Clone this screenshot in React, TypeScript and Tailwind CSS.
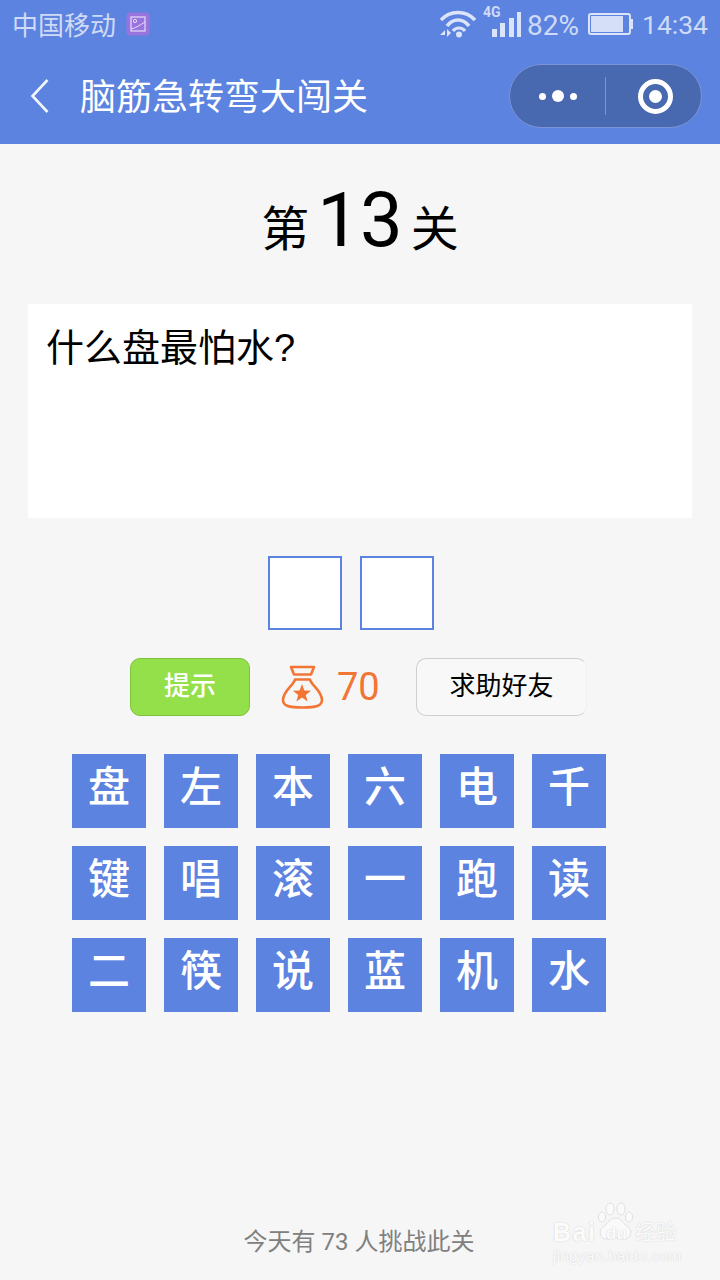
const FONT = "font-['Roboto','Noto_Sans_CJK_SC',sans-serif]";

const chars = ["盘","左","本","六","电","千","键","唱","滚","一","跑","读","二","筷","说","蓝","机","水"];

function StatusBar() {
  return (
    <div className="h-12 flex items-center justify-between pl-3 pr-3 text-[#cfdaf6]">
      <div className="flex items-center gap-[10px]">
        <span className="text-[26px] leading-[48px] pt-[4px]">中国移动</span>
        <svg width="24" height="24" viewBox="0 0 24 24">
          <rect width="23" height="23" x="0.5" y="0.5" rx="4" fill="#9a74de" />
          <rect x="5" y="5" width="14" height="14" fill="none" stroke="#e4dcf7" strokeWidth="1.2" />
          <circle cx="9" cy="9" r="1.6" fill="none" stroke="#e4dcf7" strokeWidth="1" />
          <path d="M5 17 C10 16 14 13 19 10" fill="none" stroke="#e4dcf7" strokeWidth="1" />
        </svg>
      </div>
      <div className="flex items-center">
        <svg width="38" height="28" viewBox="0 0 38 28" className="mr-[15px]">
          <path d="M2 10 C11 0 27 0 36 10" fill="none" stroke="#dbe4f9" strokeWidth="3.6" />
          <path d="M8 16 C14 8 24 8 30 16" fill="none" stroke="#dbe4f9" strokeWidth="3.6" />
          <path d="M14 21 C17 17 23 17 26 21" fill="none" stroke="#dbe4f9" strokeWidth="3.2" />
          <circle cx="20" cy="24.5" r="3" fill="#dbe4f9" />
          <path d="M1 25 L6 20 V25 Z M8 19 L12 23 L8 27 Z" fill="#dbe4f9" />
        </svg>
        <div className="relative w-[29px] h-[25px] flex items-end justify-between mr-[6px] mt-[1px]">
          <span className="absolute -top-[7px] -left-[9px] text-[14px] leading-[14px] font-bold">4G</span>
          <span className="w-[5px] h-[8px] bg-[#dbe4f9]" />
          <span className="w-[5px] h-[14px] bg-[#dbe4f9]" />
          <span className="w-[5px] h-[19px] bg-[#dbe4f9]" />
          <span className="w-[4px] h-[25px] bg-[#dbe4f9]" />
        </div>
        <span className="text-[28px] leading-[48px] mr-[9px] pt-[3px]">82%</span>
        <div className="flex items-center mr-[9px]">
          <div className="w-[43px] h-[22px] border-2 border-[#dbe4f9] rounded-[3px] p-[1px]">
            <div className="w-[32px] h-full bg-[#d5dff8]" />
          </div>
          <div className="w-[2px] h-[10px] bg-[#dbe4f9]" />
        </div>
        <span className="text-[26.5px] leading-[48px] pt-[2px]">14:34</span>
      </div>
    </div>
  );
}

function NavBar() {
  return (
    <div className="h-24 flex items-center justify-between pl-[30px] pr-[18px] text-white">
      <div className="flex items-center">
        <svg width="20" height="36" viewBox="0 0 20 36" className="mr-[30px]">
          <path d="M17.5 2 L2.5 18 L17.5 34" fill="none" stroke="#f4f6fd" strokeWidth="2.6" />
        </svg>
        <span className="text-[36px] leading-[48px] pt-[4px]">脑筋急转弯大闯关</span>
      </div>
      <div className="w-[193px] h-[64px] rounded-full bg-[#4868b0] border border-[#7a94d6] flex items-center">
        <div className="w-[95px] flex items-center justify-center gap-[6px]">
          <span className="w-[7px] h-[7px] rounded-full bg-white" />
          <span className="w-[12px] h-[12px] rounded-full bg-white" />
          <span className="w-[7px] h-[7px] rounded-full bg-white" />
        </div>
        <div className="w-px h-[38px] bg-[#7a94d6]" />
        <div className="flex-1 flex items-center justify-center pl-[3px]">
          <div className="w-[35px] h-[35px] rounded-full border-[5px] border-white flex items-center justify-center">
            <span className="w-[13px] h-[13px] rounded-full bg-white" />
          </div>
        </div>
      </div>
    </div>
  );
}

function Bag() {
  return (
    <svg width="44" height="44" viewBox="0 0 44 44">
      <path d="M10 2 H33 L30 9.5 H13 Z" fill="none" stroke="#f27534" strokeWidth="2.6" strokeLinejoin="round" />
      <path d="M14 14.5 C13 20 2 26 2 35 C2 41 8 42.5 21.5 42.5 C35 42.5 41 41 41 35 C41 26 30 20 29 14.5 Z" fill="none" stroke="#f27534" strokeWidth="2.6" strokeLinejoin="round" />
      <path d="M21 19 L23.4 25.6 L30 25.8 L24.8 29.9 L26.6 36.5 L21 32.6 L15.4 36.5 L17.2 29.9 L12 25.8 L18.6 25.6 Z" fill="#f27534" />
    </svg>
  );
}

function Watermark() {
  return (
    <div className="absolute left-[553px] top-[1202px] w-[130px] h-[62px] text-[#fbfbfb] [text-shadow:0_0_1.5px_#c9c9c9] font-['Liberation_Sans',sans-serif]">
      <svg width="40" height="40" viewBox="0 0 40 40" className="absolute left-[43px] top-0">
        <g fill="#fafafa" stroke="#e0e0e0" strokeWidth="1">
          <ellipse cx="6" cy="15" rx="3.6" ry="5" />
          <ellipse cx="14" cy="7" rx="4" ry="6" />
          <ellipse cx="25" cy="7" rx="4" ry="6" />
          <ellipse cx="33" cy="15" rx="3.6" ry="5" />
          <path d="M19.5 16 C26 16 26 21 31 24 C37 28 36 37 28 37 C24 37 22 36 19.5 36 C17 36 15 37 11 37 C3 37 2 28 8 24 C13 21 13 16 19.5 16 Z" />
        </g>
      </svg>
      <span className="absolute left-0 top-[16px] text-[25px] leading-[28px] font-bold tracking-[1.5px]">Bai</span>
      <span className="absolute left-[53px] top-[23px] text-[17px] leading-[18px] font-bold">du</span>
      <span className={`${FONT} absolute left-[82px] top-[18px] text-[21px] leading-[24px]`}>经验</span>
      <span className="absolute left-0 top-[44px] text-[15.5px] leading-[20px] tracking-[0.2px] whitespace-nowrap">jingyan.baidu.com</span>
    </div>
  );
}

export default function App() {
  return (
    <div className={`${FONT} w-[720px] h-[1280px] relative overflow-hidden bg-[#f6f6f6] flex flex-col`}>
      <div className="bg-[#5c83e0]">
        <StatusBar />
        <NavBar />
      </div>

      <div className="h-[160px] flex items-baseline justify-center pt-[36px] text-black">
        <span className="text-[48px] leading-[80px]">第</span>
        <span className="text-[76px] leading-[80px] mx-2">13</span>
        <span className="text-[48px] leading-[80px]">关</span>
      </div>

      <div className="mx-7 h-[214px] bg-white px-[18px] pt-5 text-[38px] leading-[48px] text-black font-['Liberation_Sans','Noto_Sans_CJK_SC',sans-serif]">什么盘最怕水?</div>

      <div className="mt-[38px] ml-[268px] flex gap-[18px]">
        <div className="w-[74px] h-[74px] bg-white border-2 border-[#5c83e0]" />
        <div className="w-[74px] h-[74px] bg-white border-2 border-[#5c83e0]" />
      </div>

      <div className="mt-7 pl-[130px] flex items-center h-[58px]">
        <div className="w-[120px] h-[58px] rounded-[10px] bg-[#94e04a] border border-[#7cc23c] text-white text-[26px] font-medium flex items-center justify-center pb-[2px]">提示</div>
        <div className="ml-[31px] flex"><Bag /></div>
        <span className="ml-[12px] w-[79px] text-[#f27534] text-[38px] leading-[58px]">70</span>
        <div className="w-[171px] h-[58px] rounded-[10px] bg-[#f8f8f8] border border-[#cfcfcf] border-r-[#f0f0f0] text-black text-[26px] flex items-center justify-center pb-[2px]">求助好友</div>
      </div>

      <div className="mt-[38px] ml-[72px] grid grid-cols-[repeat(6,74px)] gap-[18px]">
        {chars.map((c, i) => (
          <div key={i} className="h-[74px] bg-[#5c83e0] text-white text-[42px] font-medium leading-[68px] text-center">{c}</div>
        ))}
      </div>

      <div className="mt-auto h-[76px] text-center text-[#808080] text-[24px] leading-[76px] pr-[2px]">今天有 73 人挑战此关</div>

      <Watermark />
    </div>
  );
}
